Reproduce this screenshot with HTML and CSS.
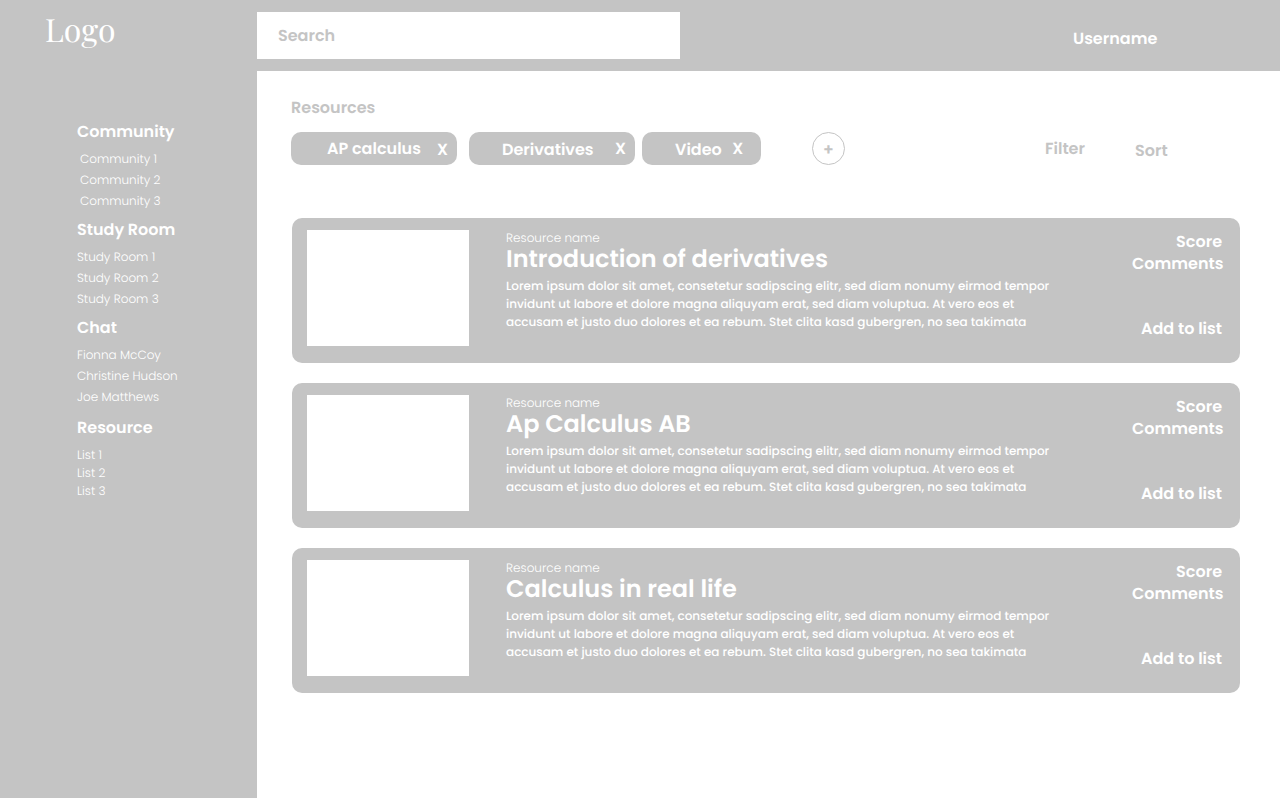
FILE: index.html
```html
<!DOCTYPE html>
<html lang="en">
<head>
<meta charset="utf-8">
<title>Resources</title>
<link rel="stylesheet" href="styles.css">
</head>
<body>
<header class="topbar">
  <div class="logo">Logo</div>
  <div class="search">Search</div>
  <div class="username">Username</div>
</header>
<div class="layout">
  <aside class="sidebar">
    <h2>Community</h2>
    <ul class="list community">
      <li>Community 1</li>
      <li>Community 2</li>
      <li>Community 3</li>
    </ul>
    <h2>Study Room</h2>
    <ul class="list">
      <li>Study Room 1</li>
      <li>Study Room 2</li>
      <li>Study Room 3</li>
    </ul>
    <h2>Chat</h2>
    <ul class="list chat">
      <li>Fionna McCoy</li>
      <li>Christine Hudson</li>
      <li>Joe Matthews</li>
    </ul>
    <h2>Resource</h2>
    <ul class="list tight">
      <li>List 1</li>
      <li>List 2</li>
      <li>List 3</li>
    </ul>
  </aside>
  <main class="content">
    <h1>Resources</h1>
    <div class="toolbar">
      <div class="tag tag-ap"><span class="label">AP calculus</span><span class="close">X</span></div>
      <div class="tag tag-der"><span class="label">Derivatives</span><span class="close">X</span></div>
      <div class="tag tag-video"><span class="label">Video</span><span class="close">X</span></div>
      <div class="add-tag">+</div>
      <div class="filter">Filter</div>
      <div class="sort">Sort</div>
    </div>
    <section class="cards">
      <article class="card">
        <div class="thumb"></div>
        <div class="info">
          <p class="name">Resource name</p>
          <h3>Introduction of derivatives</h3>
          <p class="text">Lorem ipsum dolor sit amet, consetetur sadipscing elitr, sed diam nonumy eirmod tempor<br>invidunt ut labore et dolore magna aliquyam erat, sed diam voluptua. At vero eos et<br>accusam et justo duo dolores et ea rebum. Stet clita kasd gubergren, no sea takimata</p>
        </div>
        <div class="actions"><span>Score</span><span class="comments">Comments</span><span class="add">Add to list</span></div>
      </article>
      <article class="card">
        <div class="thumb"></div>
        <div class="info">
          <p class="name">Resource name</p>
          <h3>Ap Calculus AB</h3>
          <p class="text">Lorem ipsum dolor sit amet, consetetur sadipscing elitr, sed diam nonumy eirmod tempor<br>invidunt ut labore et dolore magna aliquyam erat, sed diam voluptua. At vero eos et<br>accusam et justo duo dolores et ea rebum. Stet clita kasd gubergren, no sea takimata</p>
        </div>
        <div class="actions"><span>Score</span><span class="comments">Comments</span><span class="add">Add to list</span></div>
      </article>
      <article class="card">
        <div class="thumb"></div>
        <div class="info">
          <p class="name">Resource name</p>
          <h3>Calculus in real life</h3>
          <p class="text">Lorem ipsum dolor sit amet, consetetur sadipscing elitr, sed diam nonumy eirmod tempor<br>invidunt ut labore et dolore magna aliquyam erat, sed diam voluptua. At vero eos et<br>accusam et justo duo dolores et ea rebum. Stet clita kasd gubergren, no sea takimata</p>
        </div>
        <div class="actions"><span>Score</span><span class="comments">Comments</span><span class="add">Add to list</span></div>
      </article>
    </section>
  </main>
</div>
</body>
</html>
```
FILE: styles.css
```css
* { box-sizing: border-box; margin: 0; padding: 0; }
body {
  font: 600 16px/24px Poppins, Inter, sans-serif;
  color: #fff;
  background: #fff;
  white-space: nowrap;
  text-rendering: geometricPrecision;
}
ul { list-style: none; }

/* Header */
.topbar { display: flex; align-items: flex-start; height: 71px; background: #c4c4c4; }
.logo {
  width: 257px;
  padding: 10px 0 0 45px;
  font: 400 32px/40px "Playfair Display", "Liberation Serif", serif;
}
.search {
  width: 423px;
  height: 47px;
  margin-top: 12px;
  padding: 12px 21px;
  background: #fff;
  color: #c4c4c4;
}
.username { margin: 27px 0 0 393px; }

/* Sidebar */
.layout { display: flex; height: 727px; }
.sidebar { width: 257px; flex: none; padding: 49px 0 0 77px; background: #c4c4c4; }
h1, h2 { font-size: 16px; font-weight: 600; }
.list { padding: 5px 0 6px; font-size: 12px; font-weight: 300; line-height: 21px; }
.list.community { padding-left: 3px; }
.list.chat { padding-bottom: 8px; }
.list.tight { padding-top: 7px; line-height: 18px; }

/* Content */
.content { flex: 1; padding: 25px 40px 0 34px; }
h1 { color: #c4c4c4; }
.toolbar { display: flex; align-items: flex-start; height: 33px; margin-top: 12px; color: #c4c4c4; }
.tag {
  display: flex;
  height: 33px;
  padding-top: 5px;
  border-radius: 10px;
  background: #c4c4c4;
  color: #fff;
}
.tag-ap { width: 166px; padding-left: 36px; gap: 16px; }
.tag-ap .close { margin-top: 1px; }
.tag-der { width: 166px; margin-left: 12px; padding-left: 33px; gap: 21.5px; }
.tag-video { width: 119px; margin-left: 7px; padding-left: 33px; gap: 10.5px; }
.tag-der .label, .tag-video .label { margin-top: 1px; }
.add-tag {
  width: 33px;
  height: 33px;
  margin-left: 51px;
  padding-top: 1px;
  border: 1px solid #c4c4c4;
  border-radius: 50%;
  line-height: 31px;
  text-align: center;
}
.filter { width: 90px; margin: 5px 0 0 200px; }
.sort { margin-top: 7px; }

/* Resource cards */
.cards { display: flex; flex-direction: column; gap: 20px; margin: 53px 0 0 1px; }
.card { display: flex; height: 145px; border-radius: 10px; background: #c4c4c4; padding: 12px 18px 0 15px; }
.thumb { width: 162px; height: 116px; background: #fff; }
.info { flex: 1; padding-left: 37px; }
.name { font-size: 12px; font-weight: 300; line-height: 18px; }
h3 { font-size: 24px; font-weight: 600; line-height: 24px; }
.text { margin-top: 6px; font-size: 12px; font-weight: 500; line-height: 18px; }
.actions { display: flex; flex-direction: column; align-items: flex-end; padding-top: 1px; line-height: 22px; }
.comments { margin-right: -1.5px; }
.add { margin-top: 43px; }
```
